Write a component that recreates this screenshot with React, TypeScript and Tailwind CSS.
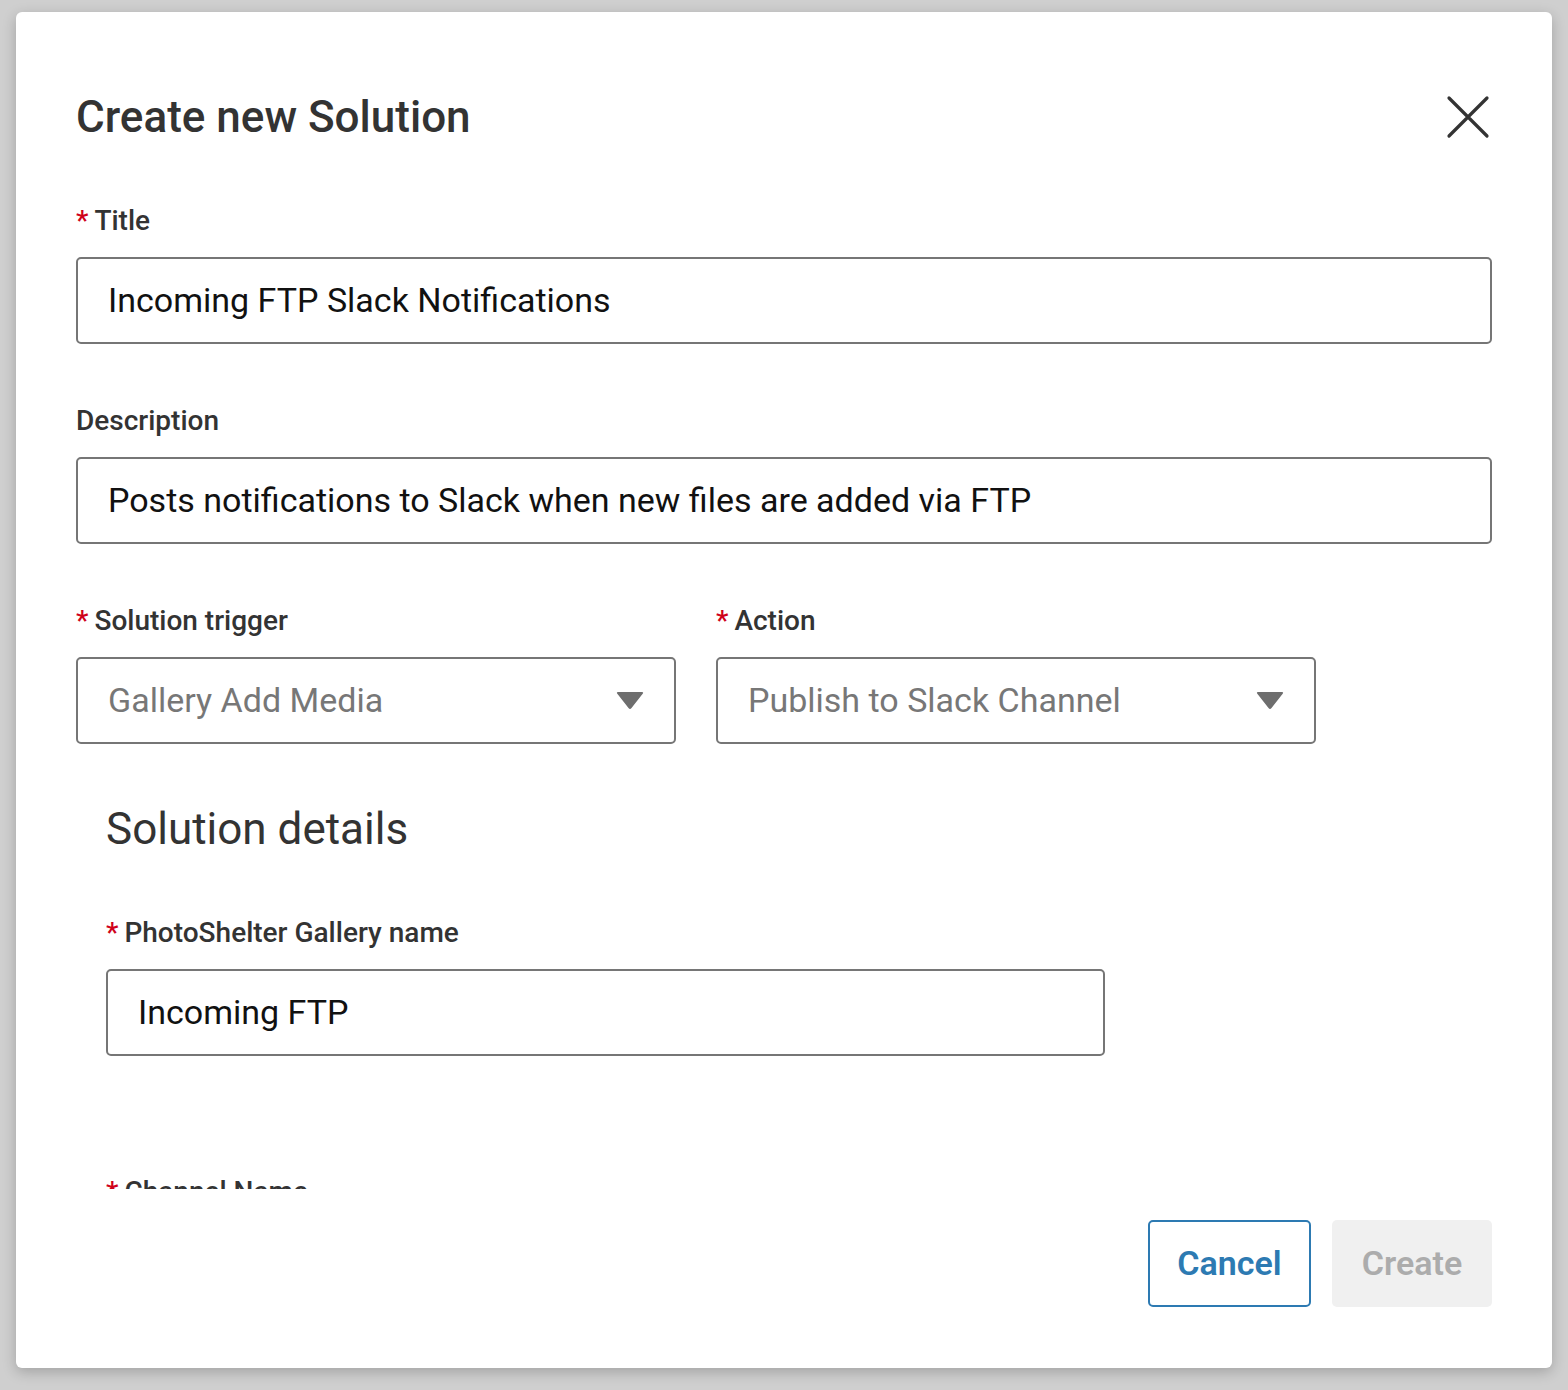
import React from "react";

const font = { fontFamily: "Roboto, 'Liberation Sans', sans-serif" };

function Label({ text, required }: { text: string; required?: boolean }) {
  return (
    <div className="h-[32px] flex items-center text-[28px] font-medium text-[#333333] leading-[32px]">
      {required && <span className="text-[#d0021b] mr-[6px]">*</span>}
      <span>{text}</span>
    </div>
  );
}

function TextBox({ value, className }: { value: string; className?: string }) {
  return (
    <div
      className={
        "h-[87px] border-2 border-[#767676] rounded-[5px] flex items-center pl-[30px] text-[34px] text-[#111111] " +
        (className || "")
      }
    >
      {value}
    </div>
  );
}

function Select({ value }: { value: string }) {
  return (
    <div className="h-[87px] w-[600px] border-2 border-[#767676] rounded-[5px] flex items-center justify-between pl-[30px] pr-[30px] text-[34px] text-[#777777]">
      <span>{value}</span>
      <svg width="28" height="19" viewBox="0 0 28 19">
        <path d="M2 1 L26 1 Q28 1 26.5 3 L15.5 17 Q14 19 12.5 17 L1.5 3 Q0 1 2 1 Z" fill="#6e6e6e" />
      </svg>
    </div>
  );
}

export default function App() {
  return (
    <div className="w-[1568px] h-[1390px] bg-[#cfcfcf] pt-[12px] pl-[16px]" style={font}>
      <div className="w-[1536px] h-[1356px] bg-white rounded-[6px] shadow-[0_4px_14px_rgba(0,0,0,0.22)] flex flex-col pl-[60px] pr-[60px] pt-[79px] pb-[61px]">
        <div className="h-[52px] flex items-center justify-between">
          <h1 className="text-[44px] font-medium text-[#333333] leading-[52px]">Create new Solution</h1>
          <svg width="44" height="44" viewBox="0 0 44 44" className="mr-[2px]">
            <path d="M3 3 L41 41 M41 3 L3 41" stroke="#333333" strokeWidth="3.2" strokeLinecap="round" />
          </svg>
        </div>
        <div className="h-[1047px] overflow-hidden pt-[62px] flex flex-col">
          <Label text="Title" required />
          <div className="mt-[20px]">
            <TextBox value="Incoming FTP Slack Notifications" />
          </div>
          <div className="mt-[61px]">
            <Label text="Description" />
          </div>
          <div className="mt-[20px]">
            <TextBox value="Posts notifications to Slack when new files are added via FTP" />
          </div>
          <div className="mt-[61px] flex gap-[40px]">
            <div className="flex flex-col">
              <Label text="Solution trigger" required />
              <div className="mt-[20px]">
                <Select value="Gallery Add Media" />
              </div>
            </div>
            <div className="flex flex-col">
              <Label text="Action" required />
              <div className="mt-[20px]">
                <Select value="Publish to Slack Channel" />
              </div>
            </div>
          </div>
          <div className="pl-[30px] flex flex-col">
            <h2 className="mt-[57px] h-[56px] flex items-center text-[44px] text-[#333333] leading-[56px]">Solution details</h2>
            <div className="mt-[60px]">
              <Label text="PhotoShelter Gallery name" required />
            </div>
            <div className="mt-[20px]">
              <TextBox value="Incoming FTP" className="w-[999px]" />
            </div>
            <div className="mt-[120px]">
              <Label text="Channel Name" required />
            </div>
          </div>
        </div>
        <div className="mt-[31px] flex justify-end gap-[21px]">
          <button className="h-[87px] w-[163px] border-2 border-[#2d7ab2] rounded-[5px] text-[34px] font-semibold text-[#2d7ab2]">
            Cancel
          </button>
          <button className="h-[87px] w-[160px] bg-[#f0f0f0] rounded-[5px] text-[34px] font-semibold text-[#acacac]">
            Create
          </button>
        </div>
      </div>
    </div>
  );
}
